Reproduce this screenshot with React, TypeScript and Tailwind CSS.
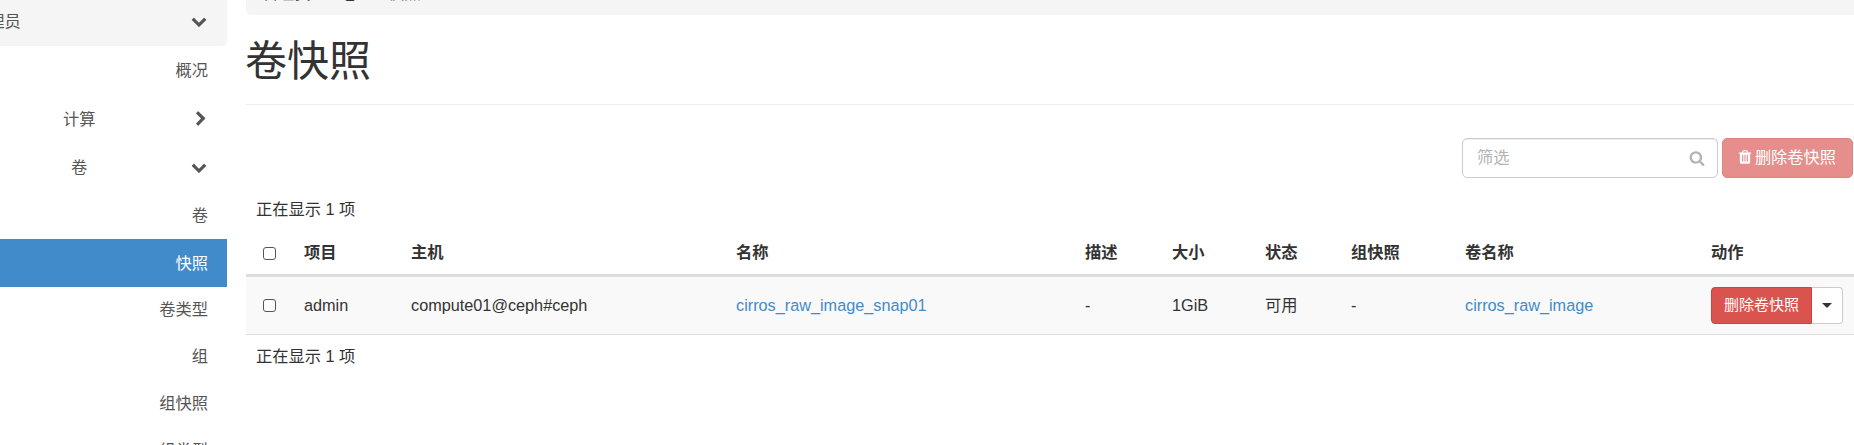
import React from "react";

const FONT = "font-['Liberation_Sans','Noto_Sans_CJK_SC',sans-serif]";

function Icon({ d, className }: { d: string; className: string }) {
  return (
    <svg viewBox="0 0 1792 1792" fill="currentColor" className={className} aria-hidden="true">
      <path d={d} />
    </svg>
  );
}

const DOWN =
  "M1683 808l-742 741q-19 19-45 19t-45-19l-742-741q-19-19-19-45.5t19-45.5l166-165q19-19 45-19t45 19l531 531 531-531q19-19 45-19t45 19l166 165q19 19 19 45.5t-19 45.5z";
const RIGHT =
  "M1363 877l-742 742q-19 19-45 19t-45-19l-166-166q-19-19-19-45t19-45l531-531-531-531q-19-19-19-45t19-45l166-166q19-19 45-19t45 19l742 742q19 19 19 45t-19 45z";
const SEARCH =
  "M1216 832q0-185-131.5-316.5t-316.5-131.5-316.5 131.5-131.5 316.5 131.5 316.5 316.5 131.5 316.5-131.5 131.5-316.5zm512 832q0 52-38 90t-90 38q-54 0-90-38l-343-342q-179 124-399 124-143 0-273.5-55.5t-225-150-150-225-55.5-273.5 55.5-273.5 150-225 225-150 273.5-55.5 273.5 55.5 225 150 150 225 55.5 273.5q0 220-124 399l343 343q37 37 37 90z";
const TRASH =
  "M704 1376v-704q0-14-9-23t-23-9h-64q-14 0-23 9t-9 23v704q0 14 9 23t23 9h64q14 0 23-9t9-23zm256 0v-704q0-14-9-23t-23-9h-64q-14 0-23 9t-9 23v704q0 14 9 23t23 9h64q14 0 23-9t9-23zm256 0v-704q0-14-9-23t-23-9h-64q-14 0-23 9t-9 23v704q0 14 9 23t23 9h64q14 0 23-9t9-23zm-544-992h448l-48-117q-7-9-17-11h-317q-10 2-17 11zm928 32v64q0 14-9 23t-23 9h-96v948q0 83-47 143.5t-113 60.5h-832q-66 0-113-58.5t-47-141.5v-952h-96q-14 0-23-9t-9-23v-64q0-14 9-23t23-9h309l70-167q15-37 54-63t79-26h320q40 0 79 26t54 63l70 167h309q14 0 23 9t9 23z";

function Sidebar() {
  return (
    <nav className="w-[227px] shrink-0 text-[#555]">
      <div className="flex h-[46px] items-center justify-between rounded-br-[5px] bg-[#f5f5f5] pr-[20px]">
        <span className="-ml-7 pb-[3px]">管理员</span>
        <Icon d={DOWN} className="mb-1 size-4" />
      </div>
      <div className="flex h-[49px] items-center justify-end pr-[19px]">概况</div>
      <div className="flex h-[48px] items-center justify-between pr-[18px] pl-[63px]">
        <span>计算</span>
        <Icon d={RIGHT} className="mb-px size-4" />
      </div>
      <div className="flex h-[49px] items-center justify-between pr-[20px] pl-[71px]">
        <span>卷</span>
        <Icon d={DOWN} className="mb-px size-4" />
      </div>
      <div className="flex h-[47px] items-center justify-end pr-[19px]">卷</div>
      <div className="flex h-[48px] items-center justify-end bg-[#428bca] pt-px pr-[19px] text-white">快照</div>
      <div className="flex h-[46px] items-center justify-end pr-[19px] pb-px">卷类型</div>
      <div className="flex h-[47px] items-center justify-end pr-[19px]">组</div>
      <div className="flex h-[47px] items-center justify-end pr-[19px]">组快照</div>
      <div className="flex h-[47px] items-center justify-end pr-[19px]">组类型</div>
    </nav>
  );
}

function Checkbox() {
  return <span className="block size-[13px] rounded-[3px] border border-[#555] bg-white" />;
}

const COLS = "grid grid-cols-[48px_107px_325px_349px_87px_93px_86px_114px_246px_153px] items-center";
const HEADERS = ["项目", "主机", "名称", "描述", "大小", "状态", "组快照", "卷名称", "动作"];

function SnapshotTable() {
  return (
    <section>
      <div className="h-9 pt-2 pl-2.5">正在显示 1 项</div>
      <div className={`${COLS} h-[51px] border-b-[3px] border-[#ddd] pt-[5px] font-bold`}>
        <div className="pt-px pl-[17px]">
          <Checkbox />
        </div>
        {HEADERS.map((h) => (
          <div key={h} className="pl-2.5">
            {h}
          </div>
        ))}
      </div>
      <div className={`${COLS} h-[58px] border-b border-[#ddd] bg-[#f9f9f9]`}>
        <div className="pl-[17px]">
          <Checkbox />
        </div>
        <div className="pl-2.5">admin</div>
        <div className="pl-2.5">compute01@ceph#ceph</div>
        <div className="pl-2.5 text-[#428bca]">cirros_raw_image_snap01</div>
        <div className="pl-2.5">-</div>
        <div className="pl-2.5">1GiB</div>
        <div className="pl-2.5">可用</div>
        <div className="pl-2.5">-</div>
        <div className="pl-2.5 text-[#428bca]">cirros_raw_image</div>
        <div className="flex pl-2.5">
          <button className="h-[37px] w-[101px] rounded-l-[4px] border border-[#d43f3a] bg-[#d9534f] pb-0.5 text-[15px] text-white">
            删除卷快照
          </button>
          <button className="flex h-[37px] w-[31px] items-center justify-center rounded-r-[4px] border border-l-0 border-[#ccc] bg-white pb-px">
            <span className="border-x-[5px] border-t-[5px] border-x-transparent border-t-[#333]" />
          </button>
        </div>
      </div>
      <div className="pt-2.5 pl-2.5">正在显示 1 项</div>
    </section>
  );
}

export default function App() {
  return (
    <div className={`${FONT} flex h-[445px] w-[1854px] overflow-hidden bg-white text-[16.25px] leading-[23px] text-[#333]`}>
      <Sidebar />
      <main className="flex w-[1627px] flex-col pl-[19px]">
        <div className="flex h-[15px] items-end rounded-bl-[5px] bg-[#f5f5f5] pb-[10px] pl-4">
          <span>管理员</span>
          <span className="px-[13px] text-[#ccc]">/</span>
          <span>卷</span>
          <span className="px-[13px] text-[#ccc]">/</span>
          <span className="text-[#777]">快照</span>
        </div>
        <h1 className="-ml-px h-[90px] pt-[22px] text-[42px] leading-[50px]">卷快照</h1>
        <div className="-mt-px h-px shrink-0 bg-[#eee]" />
        <div className="mt-[33px] flex justify-end gap-1 pr-px">
          <div className="flex h-10 w-[256px] items-center justify-between rounded-[5px] border border-[#ccc] pr-3 pl-[14px] text-[#b3b3b3] shadow-[inset_0_1px_1px_rgba(0,0,0,0.075)]">
            <span className="pb-px">筛选</span>
            <Icon d={SEARCH} className="size-4" />
          </div>
          <button className="flex h-10 w-[131px] items-center justify-center gap-0.5 rounded-[5px] border border-[#d43f3a] bg-[#d9534f] pr-0.5 text-white opacity-65">
            <Icon d={TRASH} className="mb-0.5 size-4" />
            <span className="pb-px">删除卷快照</span>
          </button>
        </div>
        <div className="mt-[12px]">
          <SnapshotTable />
        </div>
      </main>
    </div>
  );
}
